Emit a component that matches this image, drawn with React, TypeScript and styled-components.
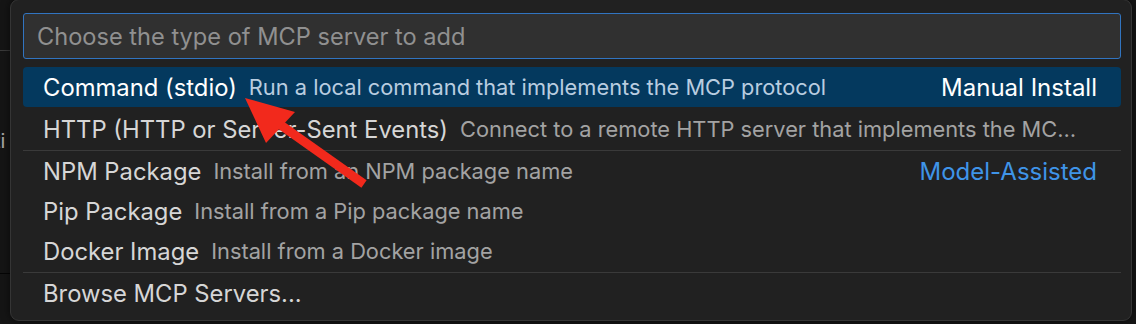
import React from 'react';
import styled, { createGlobalStyle } from 'styled-components';

interface iItem {
  label: string;
  description?: string;
  detail?: string;
  detailTone?: 'plain' | 'link';
  separator?: boolean;
  selected?: boolean;
}

const items: iItem[] = [
  {
    label: 'Command (stdio)',
    description: 'Run a local command that implements the MCP protocol',
    detail: 'Manual Install',
    selected: true,
  },
  {
    label: 'HTTP (HTTP or Server-Sent Events)',
    description: 'Connect to a remote HTTP server that implements the MCP protocol',
  },
  {
    label: 'NPM Package',
    description: 'Install from an NPM package name',
    detail: 'Model-Assisted',
    detailTone: 'link',
    separator: true,
  },
  { label: 'Pip Package', description: 'Install from a Pip package name' },
  { label: 'Docker Image', description: 'Install from a Docker image' },
  { label: 'Browse MCP Servers...', separator: true },
];

const GlobalStyle = createGlobalStyle`
  html, body {
    margin: 0;
    padding: 0;
    background: #141414;
    font-family: Inter, "Noto Sans", "Liberation Sans", sans-serif;
    -webkit-font-smoothing: antialiased;
  }
`;

const Stage = styled.div`
  position: relative;
  width: 1136px;
  height: 324px;
  overflow: hidden;
  background: #151515;
`;

/* editor bits peeking out behind the quick pick */
const Backdrop = styled.div`
  display: flex;
  flex-direction: column;
  width: 12px;
  height: 100%;
  overflow: hidden;
`;

const BackLine = styled.div<{ $top: number; $color: string }>`
  margin-top: ${(p) => p.$top}px;
  height: 1px;
  background: ${(p) => p.$color};
`;

const BackText = styled.span`
  margin-top: 78px;
  margin-left: -6px;
  font-size: 20px;
  color: #a8a8a8;
  white-space: nowrap;
`;

const Panel = styled.div`
  position: absolute;
  left: 10px;
  top: -1px;
  width: 1122px;
  height: 322px;
  box-sizing: border-box;
  padding: 13px 10px 0 12px;
  background: #212121;
  border: 1px solid #353535;
  border-radius: 9px;
  box-shadow: 0 0 8px rgba(0, 0, 0, 0.6);
`;

const Input = styled.div`
  height: 46px;
  box-sizing: border-box;
  display: flex;
  align-items: center;
  padding-left: 13px;
  background: #303030;
  border: 1.5px solid #3174c0;
  border-radius: 3px;
  font-size: 23.6px;
  color: #909090;
`;

const List = styled.div`
  margin-top: 8px;
  display: flex;
  flex-direction: column;
`;

const Row = styled.div<{ $selected?: boolean; $separator?: boolean }>`
  height: 40px;
  display: flex;
  align-items: center;
  padding: 0 24px 0 20px;
  background: ${(p) => (p.$selected ? '#04395e' : 'transparent')};
  margin-top: ${(p) => (p.$separator ? '1px' : '0')};
  border-top: ${(p) => (p.$separator ? '1px solid #3a3a3a' : 'none')};
  border-radius: ${(p) => (p.$separator ? '0' : '4px')};
  margin-bottom: ${(p) => (p.$selected ? '2px' : '0')};
  white-space: nowrap;
  overflow: hidden;
`;

const Label = styled.span<{ $selected?: boolean }>`
  flex: none;
  font-size: 23.8px;
  color: ${(p) => (p.$selected ? '#ffffff' : '#d6d6d6')};
`;

const Description = styled.span<{ $selected?: boolean; $wide?: boolean }>`
  flex: 1;
  min-width: 0;
  margin-left: 12px;
  margin-right: ${(p) => (p.$wide ? '10px' : '0')};
  font-size: 21.8px;
  overflow: hidden;
  text-overflow: ellipsis;
  color: ${(p) => (p.$selected ? '#b9cde0' : '#a3a3a3')};
`;

const Detail = styled.span<{ $tone: 'plain' | 'link' }>`
  flex: none;
  margin-left: 16px;
  font-size: 24px;
  color: ${(p) => (p.$tone === 'link' ? '#3f94e8' : '#ffffff')};
`;

const Arrow = styled.svg`
  position: absolute;
  left: 0;
  top: 0;
  pointer-events: none;
`;

function Item({ item }: { item: iItem }) {
  return (
    <Row $selected={item.selected} $separator={item.separator}>
      <Label $selected={item.selected}>{item.label}</Label>
      {item.description && (
        <Description $selected={item.selected} $wide={!item.detail}>
          {item.description}
        </Description>
      )}
      {item.detail && <Detail $tone={item.detailTone || 'plain'}>{item.detail}</Detail>}
    </Row>
  );
}

export default function App() {
  return (
    <>
      <GlobalStyle />
      <Stage>
        <Backdrop>
          <BackLine $top={50} $color="#3a3a3a" />
          <BackText>ti</BackText>
          <BackLine $top={120} $color="#050505" />
        </Backdrop>
        <Panel>
          <Input>Choose the type of MCP server to add</Input>
          <List>
            {items.map((item, index) => (
              <Item key={index} item={item} />
            ))}
          </List>
        </Panel>
        <Arrow width="1136" height="324" viewBox="0 0 1136 324">
          <line x1="364" y1="184" x2="275" y2="121" stroke="#f2291c" strokeWidth="9" strokeLinecap="butt" />
          <polygon points="245,98 295,112 266,143" fill="#f2291c" />
        </Arrow>
      </Stage>
    </>
  );
}
